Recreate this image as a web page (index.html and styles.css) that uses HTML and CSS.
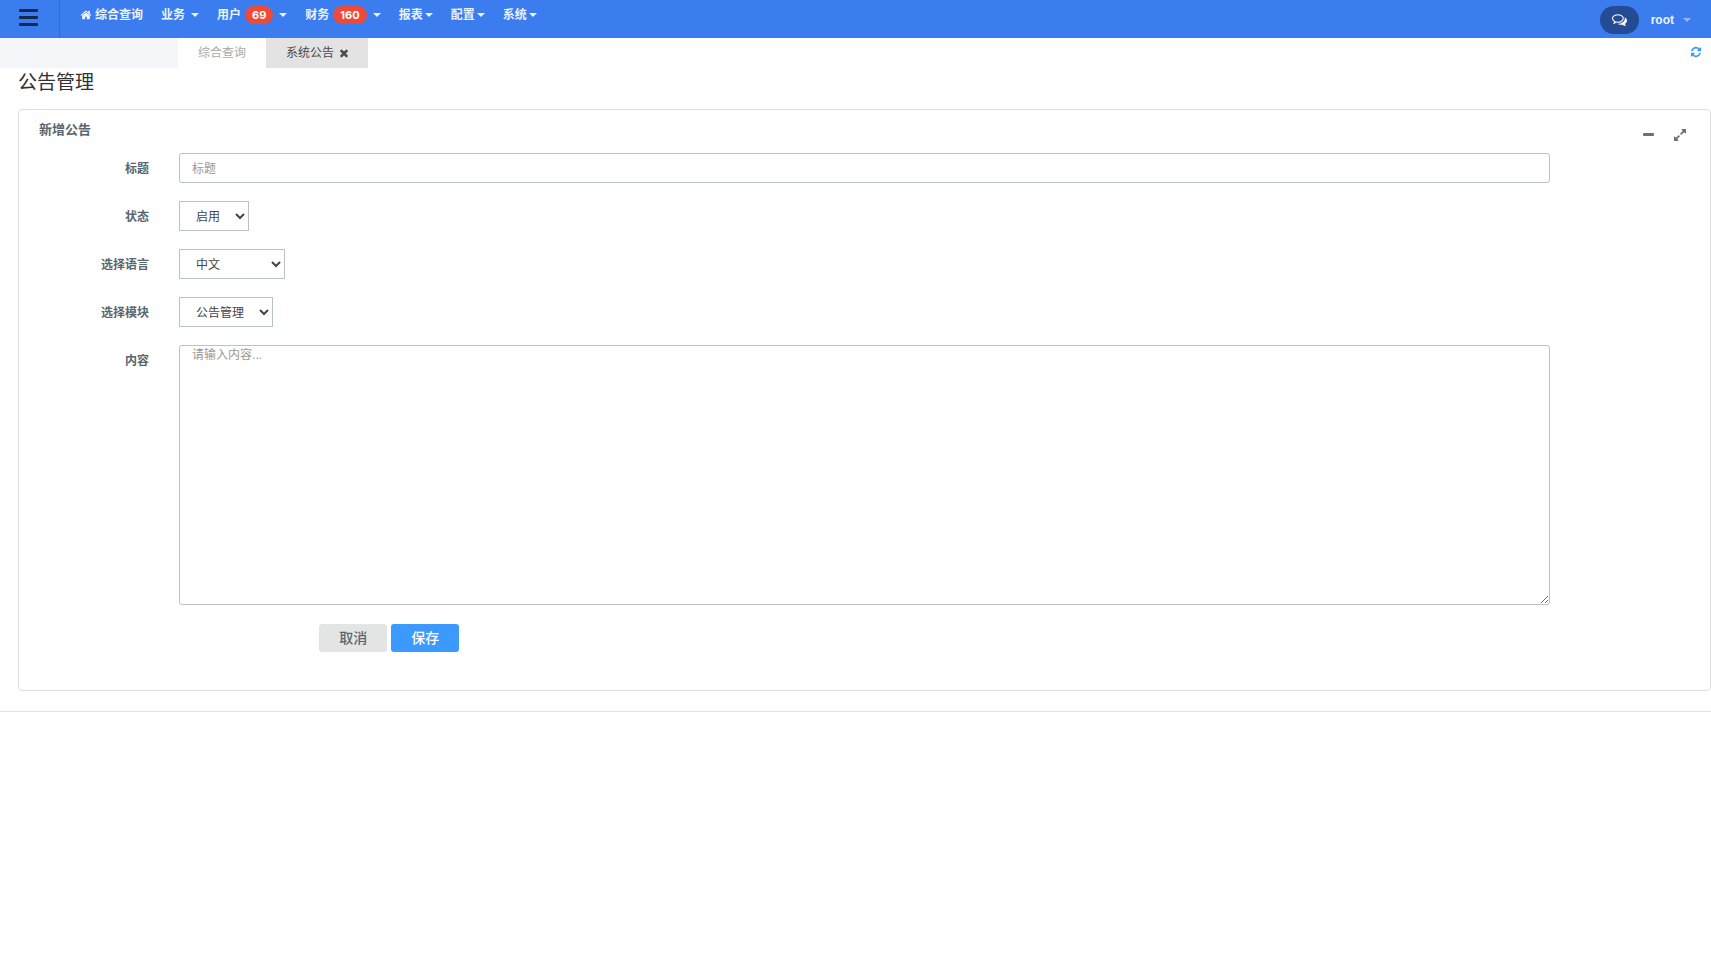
FILE: index.html
```html
<!DOCTYPE html>
<html lang="zh-CN">
<head>
<meta charset="utf-8">
<meta name="viewport" content="width=device-width, initial-scale=1">
<title>公告管理</title>
<link rel="stylesheet" href="styles.css">
</head>
<body>
<header class="header">
  <button class="menu-toggle" type="button" aria-label="菜单">
    <span class="bar"></span><span class="bar"></span><span class="bar"></span>
  </button>
  <nav class="nav">
    <a class="nav-item home" href="#"><svg class="icon-home" viewBox="0 0 1792 1792" aria-hidden="true"><path d="M1472 992v480q0 26-19 45t-45 19h-384v-384h-256v384h-384q-26 0-45-19t-19-45v-480q0-1 .5-3t.5-3l575-474 575 474q1 2 1 6zm223-69l-62 74q-8 9-21 11h-3q-13 0-21-7l-692-577-692 577q-12 8-24 7-13-2-21-11l-62-74q-8-10-7-23.5t11-21.5l719-599q32-26 76-26t76 26l244 204v-195q0-14 9-23t23-9h192q14 0 23 9t9 23v408l219 182q10 8 11 21.5t-7 23.5z"/></svg>综合查询</a>
    <a class="nav-item spaced" href="#">业务<span class="caret"></span></a>
    <a class="nav-item spaced" href="#">用户<span class="badge">69</span><span class="caret"></span></a>
    <a class="nav-item spaced" href="#">财务<span class="badge">160</span><span class="caret"></span></a>
    <a class="nav-item" href="#">报表<span class="caret"></span></a>
    <a class="nav-item" href="#">配置<span class="caret"></span></a>
    <a class="nav-item" href="#">系统<span class="caret"></span></a>
  </nav>
  <div class="user-area">
    <button class="chat" type="button" aria-label="消息"><svg class="icon-chat" viewBox="0 0 1792 1792" aria-hidden="true"><path d="M704 384q-153 0-286 52t-211.5 141-78.5 191q0 82 53 158t149 132l97 56-35 84q34-20 62-39l44-31 53 10q78 14 153 14 153 0 286-52t211.5-141 78.5-191-78.5-191-211.5-141-286-52zm0-128q191 0 353.5 68.5t256.5 186.5 94 257-94 257-256.5 186.5-353.5 68.5q-86 0-176-16-124 88-278 128-36 9-86 16h-3q-11 0-20.5-8t-11.5-21q-1-3-1-6.5t.5-6.5 2-6l2.5-5 3.5-5.5 4-5 4.5-5 4-4.5q5-6 23-25t26-29.5 22.5-29 25-38.5 20.5-44q-124-72-195-177t-71-224q0-139 94-257t256.5-186.5 353.5-68.5zm822 1169q10 24 20.5 44t25 38.5 22.5 29 26 29.5 23 25q1 1 4 4.5t4.5 5 4 5 3.5 5.5l2.5 5 2 6 .5 6.5-1 6.5q-3 14-13 22t-22 7q-50-7-86-16-154-40-278-128-90 16-176 16-271 0-472-132 58 4 88 4 161 0 309-45t264-129q125-92 192-212t67-254q0-77-23-152 129 71 204 178t75 230q0 120-71 224.5t-195 176.5z"/></svg></button>
    <a class="user" href="#">root<span class="caret"></span></a>
  </div>
</header>
<div class="tabs">
  <div class="tabs-pad"></div>
  <a class="tab" href="#">综合查询</a>
  <a class="tab active" href="#">系统公告<svg class="icon-close" viewBox="0 0 1792 1792" aria-hidden="true"><path d="M1490 1322q0 40-28 68l-136 136q-28 28-68 28t-68-28l-294-294-294 294q-28 28-68 28t-68-28l-136-136q-28-28-28-68t28-68l294-294-294-294q-28-28-28-68t28-68l136-136q28-28 68-28t68 28l294 294 294-294q28-28 68-28t68 28l136 136q28 28 28 68t-28 68l-294 294 294 294q28 28 28 68z"/></svg></a>
  <button class="refresh" type="button" aria-label="刷新"><svg class="icon-refresh" viewBox="0 0 1792 1792" aria-hidden="true"><path d="M1639 1056q0 5-1 7-64 268-268 434.5t-478 166.5q-146 0-282.5-55t-243.5-157l-129 129q-19 19-45 19t-45-19-19-45v-448q0-26 19-45t45-19h448q26 0 45 19t19 45-19 45l-137 137q71 66 161 102t187 36q134 0 250-65t186-179q11-17 53-117 8-23 30-23h192q13 0 22.5 9.5t9.5 22.5zm25-800v448q0 26-19 45t-45 19h-448q-26 0-45-19t-19-45 19-45l138-138q-148-137-349-137-134 0-250 65t-186 179q-11 17-53 117-8 23-30 23h-199q-13 0-22.5-9.5t-9.5-22.5v-7q65-268 270-434.5t480-166.5q146 0 284 55.5t245 156.5l130-129q19-19 45-19t45 19 19 45z"/></svg></button>
</div>
<main class="content">
  <h1 class="page-title">公告管理</h1>
  <section class="card">
    <div class="card-head">
      <h2 class="card-title">新增公告</h2>
      <div class="card-tools">
        <button class="tool" type="button" aria-label="收起"><svg class="icon-tool" viewBox="0 0 14 14" aria-hidden="true"><rect x="2" y="5" width="11" height="3" rx="1"/></svg></button>
        <button class="tool" type="button" aria-label="全屏"><svg class="icon-tool" viewBox="0 0 1792 1792" aria-hidden="true"><path d="M883 1056q0 13-10 23l-332 332 144 144q19 19 19 45t-19 45-45 19h-448q-26 0-45-19t-19-45v-448q0-26 19-45t45-19 45 19l144 144 332-332q10-10 23-10t23 10l114 114q10 10 10 23zm781-864v448q0 26-19 45t-45 19-45-19l-144-144-332 332q-10 10-23 10t-23-10l-114-114q-10-10-10-23t10-23l332-332-144-144q-19-19-19-45t19-45 45-19h448q26 0 45 19t19 45z"/></svg></button>
      </div>
    </div>
    <form class="form">
      <div class="row">
        <label class="label" for="title">标题</label>
        <div class="field"><input class="control text" id="title" type="text" placeholder="标题"></div>
      </div>
      <div class="row">
        <label class="label" for="status">状态</label>
        <div class="field"><select class="control select" id="status"><option>启用</option></select></div>
      </div>
      <div class="row">
        <label class="label" for="lang">选择语言</label>
        <div class="field"><select class="control select language" id="lang"><option>中文</option></select></div>
      </div>
      <div class="row">
        <label class="label" for="module">选择模块</label>
        <div class="field"><select class="control select" id="module"><option>公告管理</option></select></div>
      </div>
      <div class="row">
        <label class="label" for="body">内容</label>
        <div class="field"><textarea class="control area" id="body" placeholder="请输入内容..."></textarea></div>
      </div>
      <div class="actions">
        <button class="btn" type="button">取消</button>
        <button class="btn primary" type="button">保存</button>
      </div>
    </form>
  </section>
</main>
</body>
</html>
```

FILE: styles.css
```css
* {
  box-sizing: border-box;
}

body {
  margin: 0;
  background: #fff;
  color: #58666e;
  font: 12px/18px "Liberation Sans", "Noto Sans CJK SC", sans-serif;
}

button {
  margin: 0;
  padding: 0;
  border: 0;
  background: none;
  font: inherit;
  cursor: pointer;
}

a {
  color: inherit;
  text-decoration: none;
}

svg {
  display: block;
  flex: none;
  fill: currentColor;
}

.header {
  display: flex;
  height: 38px;
  background: #3b7cef;
  color: #ebf2fd;
  font-weight: 700;
}

.menu-toggle {
  display: flex;
  flex-direction: column;
  gap: 4px;
  width: 60px;
  padding: 9px 0 0 19px;
  border-right: 1px solid #3069cf;
}

.bar {
  width: 19px;
  height: 3px;
  border-radius: 1px;
  background: #13294f;
}

.nav {
  display: flex;
  align-items: flex-start;
  padding: 6px 0 0 11px;
}

.nav-item {
  display: flex;
  align-items: center;
  gap: 2px;
  height: 18px;
  padding: 0 9px;
  white-space: nowrap;
}

.nav-item.home {
  gap: 3px;
}

.nav-item.spaced {
  gap: 4px;
}

.spaced .caret {
  margin-left: 2px;
}

.icon-home {
  width: 12px;
  height: 12px;
}

.caret {
  border: 4px solid transparent;
  border-top-color: currentColor;
  border-bottom: 0;
}

.badge {
  padding: 0 7px;
  border-radius: 9px;
  background: #f04a37;
  color: #fff;
  font-family: Inter, sans-serif;
  font-size: 11px;
}

.user-area {
  display: flex;
  align-items: center;
  gap: 12px;
  margin-left: auto;
  padding: 2px 20px 0 0;
}

.chat {
  display: grid;
  place-items: center;
  width: 39px;
  height: 28px;
  padding-bottom: 2px;
  border-radius: 14px;
  background: #234c95;
  color: #fff;
}

.icon-chat {
  width: 15px;
  height: 15px;
}

.user {
  display: flex;
  align-items: center;
  gap: 9px;
}

.user .caret {
  opacity: 0.5;
}

.tabs {
  display: flex;
  height: 30px;
}

.tabs-pad {
  width: 178px;
  background: #f5f6f9;
}

.tab {
  display: flex;
  align-items: center;
  gap: 4px;
  padding: 0 20px;
  color: #a9a9a9;
}

.tab.active {
  padding-right: 18px;
  background: #e3e3e3;
  color: #4a4a4a;
}

.icon-close {
  width: 12px;
  height: 12px;
}

.refresh {
  margin: 0 9px 2px auto;
  color: #3c9aff;
}

.icon-refresh {
  width: 12px;
  height: 12px;
}

.content {
  padding: 0 0 20px 18px;
  border-bottom: 1px solid #e0e0e0;
}

.page-title {
  margin: 0;
  padding: 1px 0 12px;
  color: #303036;
  font-size: 19px;
  font-weight: 400;
  line-height: 28px;
}

.card {
  border: 1px solid #dcdedf;
  border-radius: 4px;
}

.card-head {
  display: flex;
  justify-content: space-between;
  height: 43px;
  padding: 11px 23px 0 20px;
}

.card-title {
  margin: 0;
  font-size: 13px;
  line-height: 18px;
}

.card-tools {
  display: flex;
  align-items: flex-start;
  gap: 18px;
  padding-top: 7px;
}

.tool {
  color: #6f6f6f;
}

.icon-tool {
  width: 14px;
  height: 14px;
}

.form {
  display: grid;
  gap: 18px;
  padding: 0 5px 38px;
}

.row {
  display: grid;
  grid-template-columns: 1fr 10fr 1fr;
}

.label {
  padding: 7px 15px 0;
  font-weight: 700;
  text-align: right;
  white-space: nowrap;
}

.field {
  display: flex;
  padding: 0 15px;
}

.control {
  height: 30px;
  margin: 0;
  padding: 7px 12px 5px;
  border: 1px solid #b9c1ca;
  background: #fff;
  color: #444;
  font: inherit;
}

.control::placeholder {
  color: #999;
}

.text,
.area {
  width: 100%;
  border-radius: 3px;
}

.area {
  height: 260px;
  padding-top: 0;
  resize: both;
}

.select {
  padding-right: 11px;
  border-radius: 0;
}

.language {
  width: 106px;
}

.actions {
  display: flex;
  gap: 4px;
  padding: 1px 0 0 calc(100% / 6 + 15px);
}

.btn {
  height: 28px;
  padding: 0 20px;
  border-radius: 3px;
  background: #e3e4e4;
  color: #58666e;
  font-size: 14px;
  font-weight: 500;
}

.primary {
  background: #3c9aff;
  color: #fff;
}
```
